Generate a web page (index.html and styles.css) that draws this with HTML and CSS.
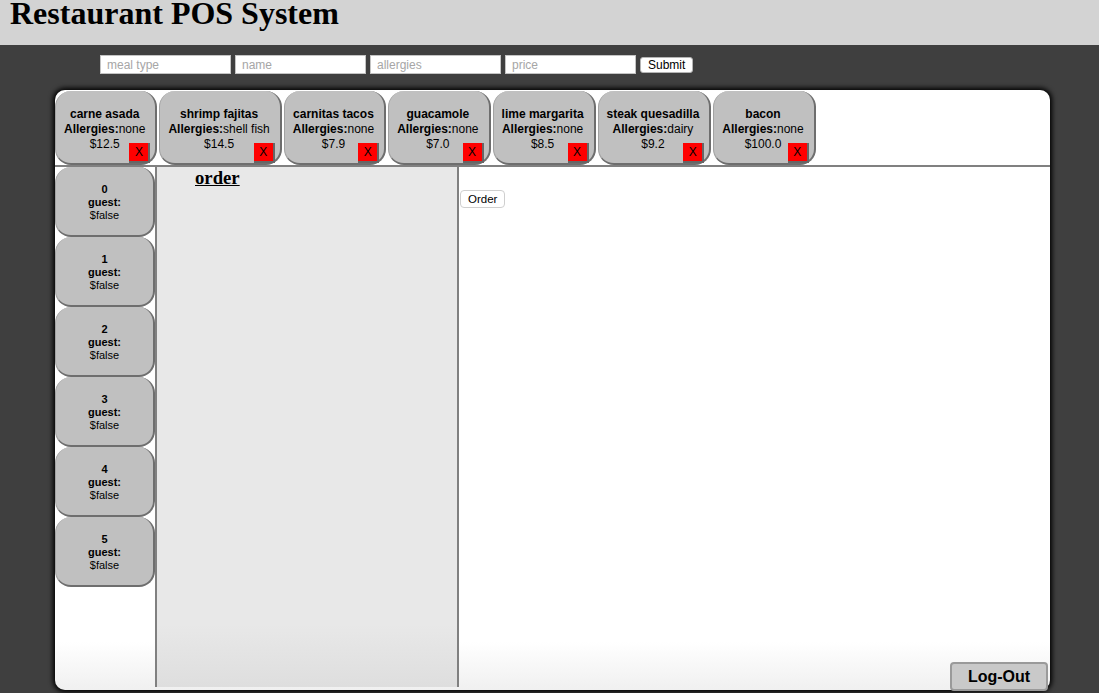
FILE: index.html
```html
<!DOCTYPE html>
<html>
<head>
<meta charset="utf-8">
<title>Restaurant POS System</title>
<link rel="stylesheet" href="styles.css">
</head>
<body>
<header class="topbar"><h1 class="title">Restaurant POS System</h1></header>
<form class="add-form">
  <input class="field" type="text" placeholder="meal type">
  <input class="field" type="text" placeholder="name">
  <input class="field" type="text" placeholder="allergies">
  <input class="field" type="text" placeholder="price">
  <button class="btn" type="button">Submit</button>
</form>
<main class="panel">
  <div class="menu-row">
    <div class="meal"><div class="meal-name">carne asada</div><div><b>Allergies:</b>none</div><div>$12.5</div><span class="del">X</span></div>
    <div class="meal"><div class="meal-name">shrimp fajitas</div><div><b>Allergies:</b>shell fish</div><div>$14.5</div><span class="del">X</span></div>
    <div class="meal"><div class="meal-name">carnitas tacos</div><div><b>Allergies:</b>none</div><div>$7.9</div><span class="del">X</span></div>
    <div class="meal"><div class="meal-name">guacamole</div><div><b>Allergies:</b>none</div><div>$7.0</div><span class="del">X</span></div>
    <div class="meal"><div class="meal-name">lime margarita</div><div><b>Allergies:</b>none</div><div>$8.5</div><span class="del">X</span></div>
    <div class="meal"><div class="meal-name">steak quesadilla</div><div><b>Allergies:</b>dairy</div><div>$9.2</div><span class="del">X</span></div>
    <div class="meal"><div class="meal-name">bacon</div><div><b>Allergies:</b>none</div><div>$100.0</div><span class="del">X</span></div>
  </div>
  <div class="workspace">
    <div class="tables">
      <div class="table"><b>0</b><b>guest:</b><span>$false</span></div>
      <div class="table"><b>1</b><b>guest:</b><span>$false</span></div>
      <div class="table"><b>2</b><b>guest:</b><span>$false</span></div>
      <div class="table"><b>3</b><b>guest:</b><span>$false</span></div>
      <div class="table"><b>4</b><b>guest:</b><span>$false</span></div>
      <div class="table"><b>5</b><b>guest:</b><span>$false</span></div>
    </div>
    <section class="order-col"><h3 class="order-title">order</h3></section>
    <div class="order-area"><button class="btn order-btn" type="button">Order</button></div>
  </div>
  <button class="logout" type="button">Log-Out</button>
</main>
</body>
</html>
```
FILE: styles.css
```css
html, body {
  margin: 0;
  padding: 0;
}
body {
  background: #3f3f3f;
  font-family: "Liberation Sans", Arial, sans-serif;
  color: #000;
  height: 693px;
  overflow: hidden;
}
.topbar {
  background: #d3d3d3;
  height: 45px;
  box-sizing: border-box;
  padding-left: 10px;
}
.title {
  margin: 0;
  font-family: "Liberation Serif", "Times New Roman", serif;
  font-size: 32px;
  font-weight: bold;
  line-height: 26px;
}
.add-form {
  display: flex;
  align-items: center;
  gap: 4px;
  margin: 10px 0 0 100px;
  height: 19px;
}
.field {
  box-sizing: border-box;
  width: 131px;
  height: 19px;
  border: 1px solid #c4c4c4;
  background: #fff;
  padding: 0 6px;
  font-family: "Liberation Sans", Arial, sans-serif;
  font-size: 12px;
  outline: none;
}
.field::placeholder {
  color: #a6a6a6;
}
.btn {
  box-sizing: border-box;
  height: 16px;
  padding: 0 7px;
  background: #fff;
  border: 1px solid #b5b5b5;
  border-radius: 3px;
  font-family: "Liberation Sans", Arial, sans-serif;
  font-size: 12px;
  line-height: 14px;
  color: #000;
}
.panel {
  position: relative;
  margin: 16px 0 0 55px;
  width: 995px;
  height: 600px;
  box-sizing: border-box;
  padding-top: 1px;
  border-radius: 10px;
  background: linear-gradient(to bottom, #fff 0%, #fff 92%, #f0f0f0 100%);
  box-shadow: 0 0 5px 2px #000;
}
.menu-row {
  display: flex;
  gap: 2px;
  height: 74px;
}
.meal {
  position: relative;
  box-sizing: border-box;
  height: 74px;
  padding: 16px 10px 0 8px;
  background: #c0c0c0;
  border-radius: 16px;
  border-right: 2px solid #6e6e6e;
  border-bottom: 2px solid #6e6e6e;
  border-left: 1px solid #a2a2a2;
  font-size: 12px;
  line-height: 15px;
  text-align: center;
  white-space: nowrap;
}
.meal-name {
  font-weight: bold;
}
.del {
  position: absolute;
  right: 5px;
  bottom: 0;
  width: 19px;
  height: 18px;
  background: #ff0000;
  border-right: 2px solid #666;
  border-bottom: 2px solid #666;
  font-size: 12px;
  line-height: 18px;
  text-align: center;
}
.workspace {
  display: flex;
  border-top: 2px solid #808080;
  height: 520px;
}
.tables {
  width: 100px;
  display: flex;
  flex-direction: column;
}
.table {
  box-sizing: border-box;
  width: 100px;
  height: 70px;
  padding-top: 16px;
  display: flex;
  flex-direction: column;
  align-items: center;
  background: #c0c0c0;
  border-radius: 16px;
  border-right: 2px solid #6e6e6e;
  border-bottom: 2px solid #6e6e6e;
  border-left: 1px solid #a2a2a2;
  font-size: 11px;
  line-height: 13px;
}
.order-col {
  width: 300px;
  border-left: 2px solid #808080;
  border-right: 2px solid #808080;
  background: linear-gradient(to bottom, #e8e8e8 0%, #e8e8e8 88%, #dedede 100%);
}
.order-title {
  margin: 0;
  padding-left: 38px;
  font-family: "Liberation Serif", "Times New Roman", serif;
  font-size: 18.72px;
  font-weight: bold;
  text-decoration: underline;
}
.order-area {
  flex: 1;
  padding: 22px 0 0 1px;
}
.order-btn {
  height: 18px;
  padding: 0 7px;
  font-size: 11.5px;
  border-color: #cfcfcf;
  border-radius: 4px;
}
.logout {
  position: absolute;
  right: 2px;
  bottom: -1px;
  width: 98px;
  height: 29px;
  box-sizing: border-box;
  background: #c9c9c9;
  border: 2px solid #9a9a9a;
  border-radius: 4px;
  font-family: "Liberation Sans", Arial, sans-serif;
  font-size: 16px;
  font-weight: bold;
  color: #000;
  padding: 0;
}
```
